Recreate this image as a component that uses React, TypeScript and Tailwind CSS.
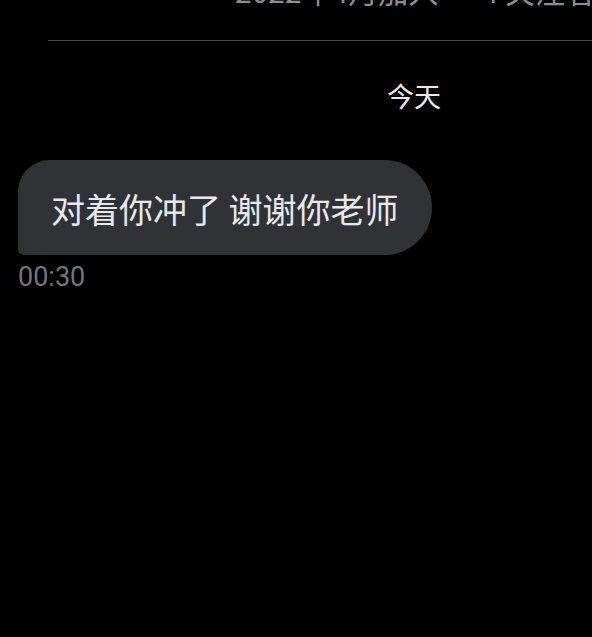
import React from "react";

export default function App() {
  const cjk = { fontFamily: '"Noto Sans CJK SC", "Noto Sans", sans-serif' };
  return (
    <div className="w-[592px] h-[637px] bg-black overflow-hidden flex flex-col" style={cjk}>
      <div className="-mt-[28px] h-[36px] pl-[235px] whitespace-nowrap text-[30px] leading-[36px] text-[#8b8f93]">
        2022年4月加入 · 4 关注者
      </div>
      <div className="ml-[48px] mt-[32px] h-px bg-[#4a4a4a]" />
      <div className="mt-[40px] pl-[236px] flex justify-center">
        <span className="text-[27px] leading-[30px] text-[#e7e9ea]">今天</span>
      </div>
      <div className="mt-[49px] pl-[18px] flex">
        <div className="h-[95px] bg-[#2f3336] rounded-tl-[32px] rounded-bl-[6px] rounded-r-[48px] px-[33px] flex items-center">
          <span className="text-[34px] leading-[40px] text-[#e7e9ea] whitespace-nowrap pt-[2px]">对着你冲了 谢谢你老师</span>
        </div>
      </div>
      <div
        className="mt-[6px] pl-[18px] text-[27px] leading-[32px] text-[#71767b]"
        style={{ fontFamily: 'Roboto, "Liberation Sans", sans-serif' }}
      >
        00:30
      </div>
    </div>
  );
}
